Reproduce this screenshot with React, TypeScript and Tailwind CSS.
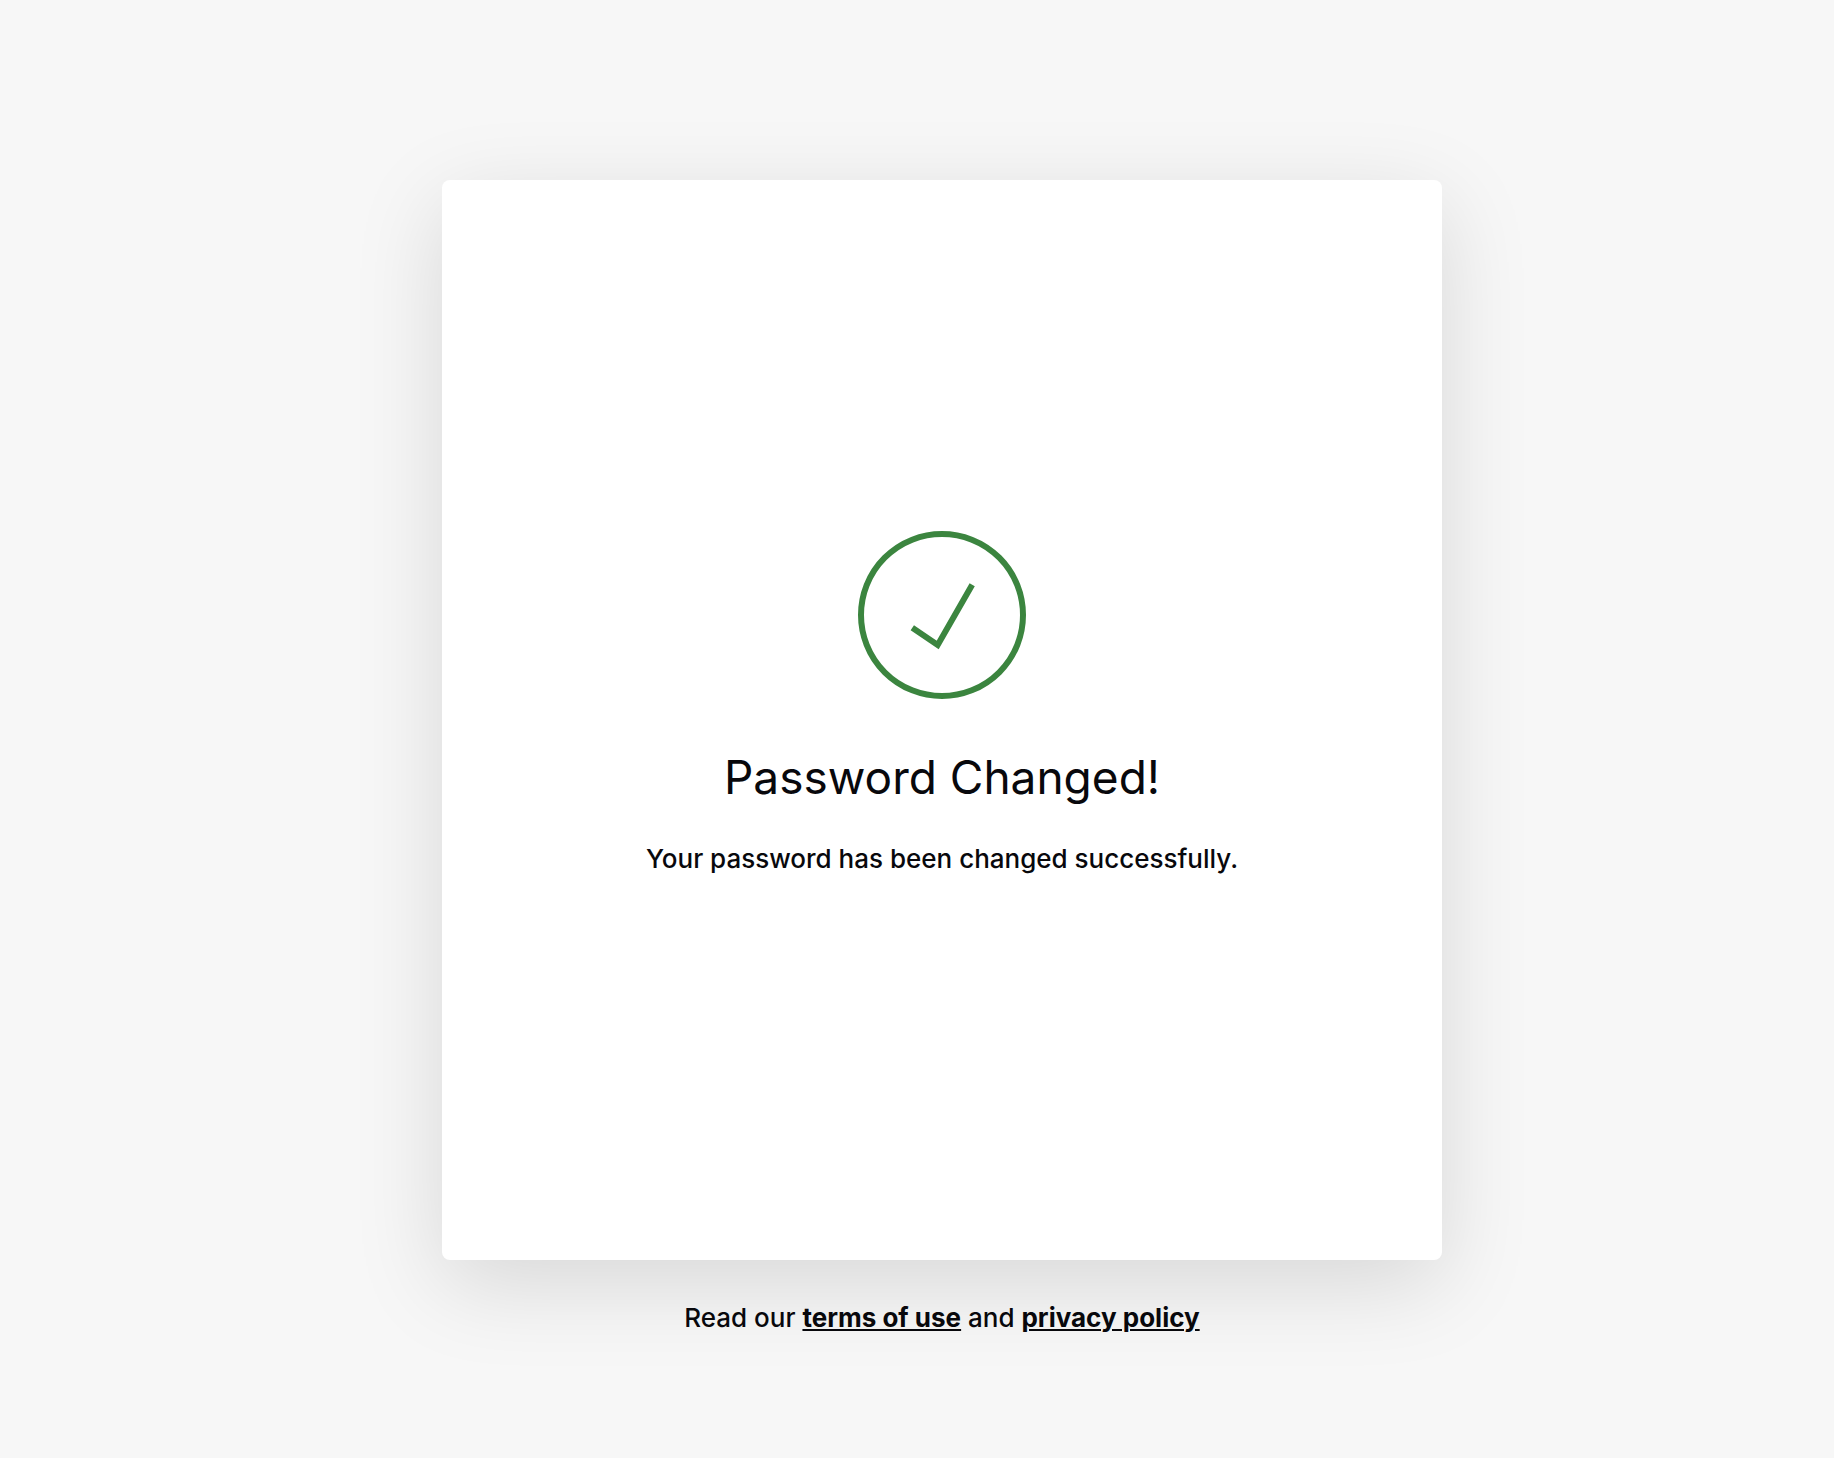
export default function App() {
  return (
    <div className="flex min-h-screen flex-col items-center bg-[#f7f7f7] py-[180px] pr-8 pl-[82px] font-['Inter',sans-serif] text-[#08080c]">
      <main className="flex min-h-[1080px] w-full max-w-[1000px] flex-col items-center justify-center rounded-lg bg-white px-8 pb-8 text-center shadow-[0_24px_90px_rgba(0,0,0,0.13)]">
        <svg viewBox="0 0 168 168" className="size-[168px]" fill="none" stroke="#3b853f" aria-hidden="true">
          <circle cx="84" cy="84" r="81" strokeWidth="6" />
          <path d="M54.3 96.8 79.7 114l34.5-60.2" strokeWidth="6" />
        </svg>
        <h1 className="mt-[46px] text-[46px] leading-16">Password Changed!</h1>
        <p className="mt-8 text-[26px] leading-9 font-medium">Your password has been changed successfully.</p>
      </main>
      <footer className="mt-10 text-center text-[26px] leading-9 font-medium">
        Read our{" "}
        <a href="#terms" className="font-bold underline decoration-2 underline-offset-2">
          terms of use
        </a>{" "}
        and{" "}
        <a href="#privacy" className="font-bold underline decoration-2 underline-offset-2">
          privacy policy
        </a>
      </footer>
    </div>
  );
}
